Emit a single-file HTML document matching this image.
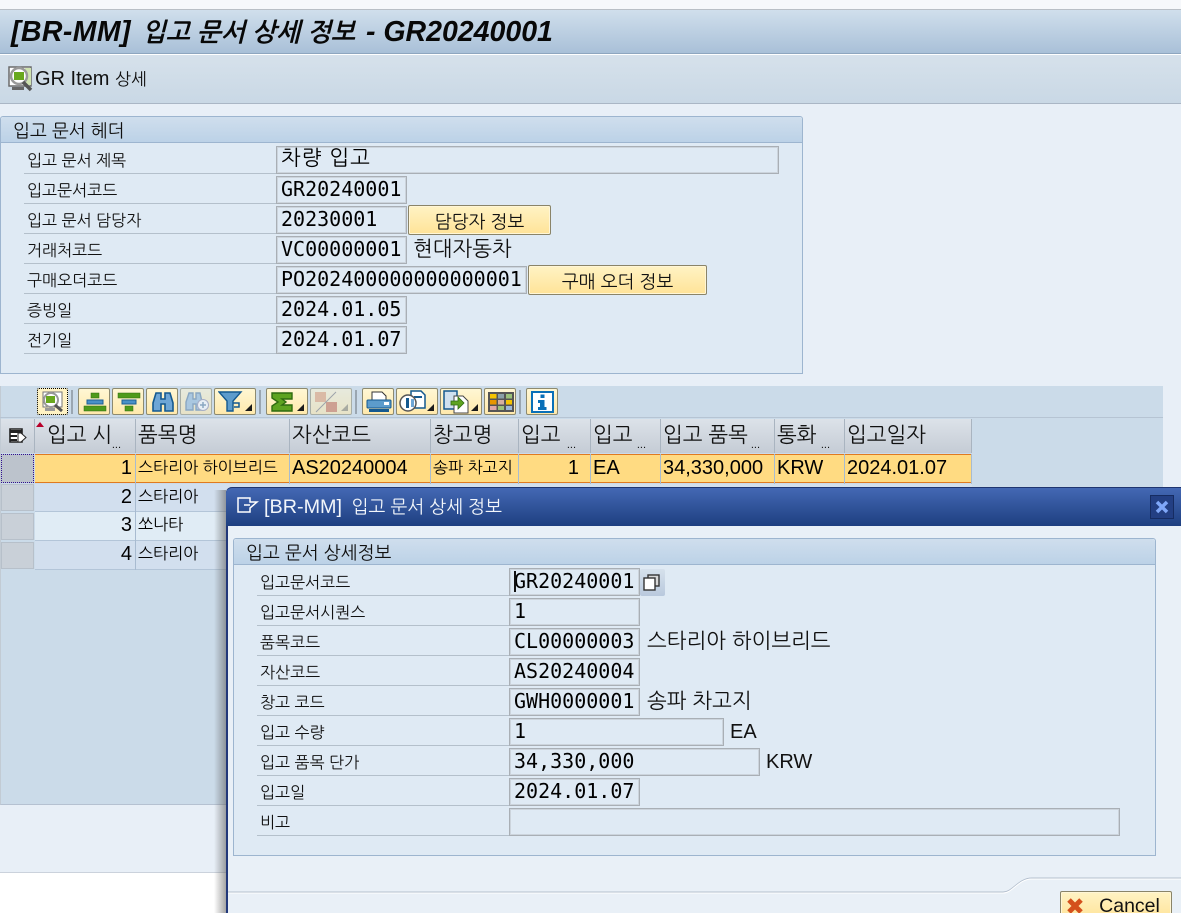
<!DOCTYPE html>
<html lang="ko"><head><meta charset="utf-8"><title>BR-MM</title>
<style>
html,body{margin:0;padding:0;width:1181px;height:913px;overflow:hidden;background:#fff}
body{position:relative;font-family:"Liberation Sans","NanumGothic","Noto Sans CJK KR",sans-serif;color:#000}
.a,.a>*{position:absolute;box-sizing:border-box}
div,span{white-space:nowrap}
.a{left:0;top:0;width:1181px;height:913px}
.ko{font-family:"NanumGothic","Noto Sans CJK KR",sans-serif}
.lb{font-family:"NanumGothic","Noto Sans CJK KR",sans-serif;font-size:16px;line-height:20px;color:#111;margin-top:1px}
.ln{height:1px;background:#b4c0cb}
.in{font-family:"DejaVu Sans Mono","Liberation Mono",monospace;font-size:20px;line-height:25px;height:28px;padding-left:4px;border:1px solid #a9afb5;box-shadow:inset 0 0 0 1px #ccd4dc;background:#dfeaf4;color:#000;overflow:hidden}
.tx{font-size:20px;line-height:24px;color:#111}
.tk{font-size:21px;line-height:24px;color:#111;margin-top:2px}
.btn{background:linear-gradient(#fff3c4,#ffe398);border:1px solid #8a8468;border-radius:2px;box-shadow:inset 0 0 0 1px #fff6d6;text-align:center;font-family:"NanumGothic","Noto Sans CJK KR",sans-serif;font-size:18px;line-height:32px;color:#111}
.tb{background:linear-gradient(#fff7d4,#ffe9ac);border:1px solid #8d8a70;border-radius:2px;height:27px;top:388px}
.tb svg,.dd{position:absolute}
.dd{right:3px;bottom:3px;width:0;height:0;border-style:solid;border-width:0 0 7px 7px;border-color:transparent transparent #1b1b1b transparent}
.sep{top:390px;width:2px;height:24px;background:#9aa6b1}
.hd{top:419px;height:34px;background:linear-gradient(#dce2e9,#c5ccd5);border-right:1px solid #a9b4c0;font-family:"NanumGothic","Noto Sans CJK KR",sans-serif;font-size:21px;line-height:34px;padding-left:2px;color:#111;overflow:hidden}
.dots{position:absolute;right:14px;bottom:4px;font:11px/8px "Liberation Sans",sans-serif;letter-spacing:0}
.cell{height:29px;font-size:20px;line-height:28px;overflow:hidden;padding-left:2px;color:#000}
.k{font-family:"NanumGothic","Noto Sans CJK KR",sans-serif;font-size:16px}
.r{text-align:right;padding:0 3px 0 0}
.sel{background:#c9d0d8;border:1px solid #b7c0ca;width:33px;left:1px}
.vl{width:1px;background:#a8bbd0}
</style></head><body>
<div class="a">
<!-- page -->
<div style="left:0;top:0;width:1181px;height:10px;background:#f6f8fb;border-bottom:1px solid #b9bfc6"></div>
<div style="left:0;top:10px;width:1181px;height:44px;background:linear-gradient(#d0dfec,#a9c0d8);border-bottom:1px solid #8ea6bf"></div>
<div style="left:11px;top:13.500px;font:italic bold 28.5px/36px 'Liberation Sans','NanumGothic',sans-serif;color:#080808"><span style="letter-spacing:.4px">[BR-MM]</span> <span class="ko" style="font-size:25.5px;margin:0 3px 0 3px">입고 문서 상세 정보</span> - GR20240001</div>
<div style="left:0;top:55px;width:1181px;height:49px;background:linear-gradient(#d6e1eb,#c9d8e5);border-bottom:1px solid #aab6c5"></div>
<svg style="left:8px;top:65px" width="26" height="28" viewBox="0 0 26 28"><rect x="1" y="2" width="22" height="19" fill="#fff" stroke="#6b6b6b" stroke-width="1.5"/><rect x="17" y="3" width="6" height="17" fill="#cfe3b0"/><circle cx="11" cy="11" r="8" fill="#fff" stroke="#999" stroke-width="2.5"/><rect x="6" y="7" width="10" height="8" fill="#69a81e"/><path d="M15 17l8 8" stroke="#555" stroke-width="3.5"/><rect x="4" y="22" width="12" height="3" fill="#666"/></svg>
<div style="left:35px;top:66px;font-size:20px;line-height:26px;color:#111">GR Item <span class="ko" style="font-size:17px">상세</span></div>
<div style="left:0;top:104px;width:1181px;height:769px;background:#e8eff7;border-bottom:1px solid #cbd2dc"></div>

<!-- header group -->
<div style="left:0;top:116px;width:803px;height:258px;background:#dfeaf4;border:1px solid #9db5cf;border-radius:3px 3px 0 0"></div>
<div style="left:1px;top:117px;width:801px;height:26px;background:linear-gradient(#cfdeed,#bcd2e7);border-bottom:1px solid #9db5cf;border-radius:3px 3px 0 0"></div>
<div class="ko" style="left:13px;top:119px;font-size:18px;line-height:24px;color:#111">입고 문서 헤더</div>

<div class="lb" style="left:27px;top:150px">입고 문서 제목</div><div class="ln" style="left:24px;top:173px;width:754px"></div>
<div class="lb" style="left:27px;top:180px">입고문서코드</div><div class="ln" style="left:24px;top:203px;width:252px"></div>
<div class="lb" style="left:27px;top:210px">입고 문서 담당자</div><div class="ln" style="left:24px;top:233px;width:252px"></div>
<div class="lb" style="left:27px;top:240px">거래처코드</div><div class="ln" style="left:24px;top:263px;width:252px"></div>
<div class="lb" style="left:27px;top:270px">구매오더코드</div><div class="ln" style="left:24px;top:293px;width:252px"></div>
<div class="lb" style="left:27px;top:300px">증빙일</div><div class="ln" style="left:24px;top:323px;width:252px"></div>
<div class="lb" style="left:27px;top:330px">전기일</div><div class="ln" style="left:24px;top:353px;width:252px"></div>

<div class="in ko" style="left:276px;top:146px;width:503px;font-family:'NanumGothic','Noto Sans CJK KR',sans-serif;font-size:21px;line-height:24px;letter-spacing:1px;padding-left:4px">차량 입고</div>
<div class="in" style="left:276px;top:176px;width:131px">GR20240001</div>
<div class="in" style="left:276px;top:206px;width:131px">20230001</div>
<div class="btn" style="left:408px;top:205px;width:143px;height:30px">담당자 정보</div>
<div class="in" style="left:276px;top:236px;width:131px">VC00000001</div>
<div class="tk ko" style="left:413px;top:236px">현대자동차</div>
<div class="in" style="left:276px;top:266px;width:251px">PO202400000000000001</div>
<div class="btn" style="left:528px;top:265px;width:179px;height:30px">구매 오더 정보</div>
<div class="in" style="left:276px;top:296px;width:131px">2024.01.05</div>
<div class="in" style="left:276px;top:326px;width:131px">2024.01.07</div>

<!-- grid -->
<div style="left:0;top:386px;width:1163px;height:419px;background:#cbdbe9;border-bottom:1px solid #b5c1d1;border-left:1px solid #c2cbd4"></div>
<div style="left:0;top:417px;width:1163px;height:1px;background:#b6c4d3"></div>

<!-- toolbar -->
<div class="tb" style="left:37px;width:31px;border:1px dotted #000;background:#fff3c4"><svg style="left:3px;top:2px" width="24" height="22" viewBox="0 0 24 22"><rect x="2" y="1" width="19" height="15" fill="#fff" stroke="#777"/><circle cx="10" cy="9" r="7" fill="#fff" stroke="#999" stroke-width="2"/><rect x="5" y="5" width="9" height="7" fill="#69a81e"/><path d="M14 14l7 6" stroke="#555" stroke-width="3"/><rect x="4" y="17" width="10" height="3" fill="#999"/></svg></div>
<div class="sep" style="left:71px"></div>
<div class="tb" style="left:78px;width:32px"><svg style="left:4px;top:3px" width="24" height="20" viewBox="0 0 24 20"><rect x="8" y="1" width="8" height="5" fill="#4f9a1a" stroke="#2f6b10" stroke-width=".5"/><rect x="4" y="8" width="16" height="4" fill="#4a90c8" stroke="#1c5f96"/><rect x="1" y="14" width="22" height="5" fill="#4f9a1a" stroke="#2f6b10" stroke-width=".5"/></svg></div>
<div class="tb" style="left:112px;width:32px"><svg style="left:4px;top:3px" width="24" height="20" viewBox="0 0 24 20"><rect x="1" y="1" width="22" height="5" fill="#4f9a1a" stroke="#2f6b10" stroke-width=".5"/><rect x="5" y="8" width="14" height="4" fill="#4a90c8" stroke="#1c5f96"/><rect x="8" y="14" width="8" height="5" fill="#4f9a1a" stroke="#2f6b10" stroke-width=".5"/></svg></div>
<div class="tb" style="left:146px;width:32px"><svg style="left:4px;top:2px" width="24" height="22" viewBox="0 0 24 22"><path d="M5 2h5v6h4V2h5l3 10v8h-8v-7h-4v7H2v-8z" fill="#6ea6d6" stroke="#14598f" stroke-width="1.6"/></svg></div>
<div class="tb" style="left:180px;width:32px;opacity:.55"><svg style="left:4px;top:2px" width="24" height="22" viewBox="0 0 24 22"><path d="M4 2h4v6h3V2h4l2 9v8H11v-6H8v6H1v-8z" fill="#8fb7da" stroke="#557ea3" stroke-width="1.4"/><circle cx="18" cy="14" r="5.5" fill="#fff" stroke="#88a"/><path d="M15 14h6M18 11v6" stroke="#557ea3" stroke-width="1.5"/></svg></div>
<div class="tb" style="left:214px;width:42px"><svg style="left:3px;top:2px" width="26" height="22" viewBox="0 0 26 22"><path d="M1 1h22l-8 9v10h-6V10z" fill="#5d9ccc" stroke="#14598f" stroke-width="1.4"/><path d="M15 12h6v4h-5" fill="none" stroke="#14598f" stroke-width="1.5"/></svg><span class="dd"></span></div>
<div class="sep" style="left:259px"></div>
<div class="tb" style="left:266px;width:42px"><svg style="left:3px;top:2px" width="24" height="22" viewBox="0 0 24 22"><path d="M2 2h20v6h-10l4 3-4 3h10v6H2v-5l6-4-6-4z" fill="#5ea320" stroke="#2f6b10" stroke-width="1.4"/></svg><span class="dd"></span></div>
<div class="tb" style="left:310px;width:42px;opacity:.55"><svg style="left:3px;top:2px" width="24" height="22" viewBox="0 0 24 22"><rect x="1" y="1" width="11" height="10" fill="#e8a070"/><rect x="12" y="11" width="11" height="10" fill="#d0704c"/><path d="M2 21L22 1" stroke="#777" stroke-width="1"/></svg><span class="dd" style="opacity:.5"></span></div>
<div class="sep" style="left:355px"></div>
<div class="tb" style="left:362px;width:32px"><svg style="left:3px;top:2px" width="26" height="22" viewBox="0 0 26 22"><path d="M6 1h10l4 4v5H6z" fill="#fff" stroke="#333"/><rect x="1" y="9" width="24" height="8" rx="1" fill="#5c9ccc" stroke="#14598f"/><rect x="18" y="11" width="5" height="3" fill="#fff"/><rect x="3" y="18" width="20" height="3" fill="#14598f"/></svg></div>
<div class="tb" style="left:396px;width:42px"><svg style="left:2px;top:1px" width="27" height="24" viewBox="0 0 27 24"><path d="M12 1h10l4 4v13H12z" fill="#fff" stroke="#14598f" stroke-width="1.5"/><rect x="15" y="6" width="8" height="2" fill="#14598f"/><circle cx="9" cy="13" r="8" fill="#fff" stroke="#555" stroke-width="1.5"/><rect x="7" y="8" width="3" height="10" fill="#14598f"/><rect x="12" y="9" width="3" height="8" fill="#6ea6d6"/></svg><span class="dd"></span></div>
<div class="tb" style="left:440px;width:42px"><svg style="left:2px;top:1px" width="27" height="24" viewBox="0 0 27 24"><rect x="1" y="1" width="13" height="18" fill="#cfe0ef" stroke="#14598f" stroke-width="1.5"/><path d="M11 6h9l5 5v12H11z" fill="#fff" stroke="#444"/><path d="M8 11h7V7l6 6-6 6v-4H8z" fill="#5ea320" stroke="#2f6b10" stroke-width=".8"/></svg><span class="dd"></span></div>
<div class="tb" style="left:484px;width:32px"><svg style="left:3px;top:3px" width="26" height="20" viewBox="0 0 26 20"><rect width="26" height="20" fill="#555"/><rect x="2" y="2" width="6.5" height="4.5" fill="#f5c400"/><rect x="10" y="2" width="6" height="4.5" fill="#8aa0a8"/><rect x="18" y="2" width="6" height="4.5" fill="#9bc27a"/><rect x="2" y="8" width="6.5" height="4.5" fill="#e89600"/><rect x="10" y="8" width="6" height="4.5" fill="#d6b0a0"/><rect x="18" y="8" width="6" height="4.5" fill="#f5c400"/><rect x="2" y="14" width="6.5" height="4" fill="#e0a8a8"/><rect x="10" y="14" width="6" height="4" fill="#9bc27a"/><rect x="18" y="14" width="6" height="4" fill="#9cb8d8"/></svg></div>
<div class="sep" style="left:519px"></div>
<div class="tb" style="left:526px;width:32px"><svg style="left:4px;top:2px" width="23" height="22" viewBox="0 0 23 22"><rect x="1" y="1" width="21" height="20" fill="#fff" stroke="#0a70b8" stroke-width="2"/><rect x="9.5" y="3.5" width="4" height="3.5" fill="#0a70b8"/><path d="M7 9h6.500v7h2v3H7v-3h2v-4H7z" fill="#0a70b8"/></svg></div>

<!-- columns header -->
<div class="hd" style="left:1px;width:34px"><svg style="position:absolute;left:8px;top:9px" width="18" height="16" viewBox="0 0 18 16"><path d="M1 1h12v13H1z" fill="#fff" stroke="#222" stroke-width="1.6"/><path d="M1 2h12v3H1zM1 7h7v2H1zM1 11h7v2H1z" fill="#222"/><path d="M9 5h3l5 4.500-5 4.500H9z" fill="#fff" stroke="#222"/></svg></div>
<div class="hd" style="left:35px;width:101px;padding-left:12px">입고 시<span class="dots">...</span></div>
<div style="left:36px;top:422px;width:0;height:0;border-style:solid;border-width:0 4px 5px 4px;border-color:transparent transparent #b8002a transparent"></div>
<div class="hd" style="left:136px;width:154px">품목명</div>
<div class="hd" style="left:290px;width:141px">자산코드</div>
<div class="hd" style="left:431px;width:88px">창고명</div>
<div class="hd" style="left:519px;width:72px">입고<span class="dots">...</span></div>
<div class="hd" style="left:591px;width:70px">입고<span class="dots">...</span></div>
<div class="hd" style="left:661px;width:114px">입고 품목<span class="dots">...</span></div>
<div class="hd" style="left:775px;width:70px">통화<span class="dots">...</span></div>
<div class="hd" style="left:845px;width:127px">입고일자</div>

<!-- rows -->
<div style="left:35px;top:454px;width:937px;height:29px;background:#ffdb82;border-top:1px solid #e07a20;border-bottom:1px solid #e07a20"></div>
<div style="left:35px;top:484px;width:937px;height:28px;background:#d2dfee"></div>
<div style="left:35px;top:512px;width:937px;height:29px;background:#e0ecf5"></div>
<div style="left:35px;top:541px;width:937px;height:29px;background:#d2dfee"></div>
<div style="left:35px;top:511px;width:937px;height:1px;background:#b3c5d8"></div>
<div style="left:35px;top:540px;width:937px;height:1px;background:#b3c5d8"></div>
<div style="left:35px;top:569px;width:937px;height:1px;background:#b3c5d8"></div>
<div class="vl" style="left:135px;top:454px;height:116px"></div>
<div class="vl" style="left:289px;top:454px;height:30px"></div>
<div class="vl" style="left:430px;top:454px;height:30px"></div>
<div class="vl" style="left:518px;top:454px;height:30px"></div>
<div class="vl" style="left:590px;top:454px;height:30px"></div>
<div class="vl" style="left:660px;top:454px;height:30px"></div>
<div class="vl" style="left:774px;top:454px;height:30px"></div>
<div class="vl" style="left:844px;top:454px;height:30px"></div>
<div class="vl" style="left:971px;top:454px;height:30px"></div>

<div class="sel" style="top:454px;height:29px;background:#bcc3cc;border:1px dotted #301090"></div>
<div class="sel" style="top:484px;height:27px"></div>
<div class="sel" style="top:513px;height:27px"></div>
<div class="sel" style="top:542px;height:27px"></div>

<div class="cell r" style="left:35px;top:454px;width:100px">1</div>
<div class="cell r" style="left:35px;top:483px;width:100px">2</div>
<div class="cell r" style="left:35px;top:511px;width:100px">3</div>
<div class="cell r" style="left:35px;top:540px;width:100px">4</div>
<div class="cell k" style="left:136px;top:454px;width:153px">스타리아 하이브리드</div>
<div class="cell k" style="left:136px;top:483px;width:90px">스타리아</div>
<div class="cell k" style="left:136px;top:511px;width:90px">쏘나타</div>
<div class="cell k" style="left:136px;top:540px;width:90px">스타리아</div>
<div class="cell" style="left:290px;top:454px;width:140px">AS20240004</div>
<div class="cell k" style="left:431px;top:454px;width:87px">송파 차고지</div>
<div class="cell r" style="left:519px;top:454px;width:71px;padding-right:11px">1</div>
<div class="cell" style="left:591px;top:454px;width:69px">EA</div>
<div class="cell" style="left:661px;top:454px;width:113px">34,330,000</div>
<div class="cell" style="left:775px;top:454px;width:69px">KRW</div>
<div class="cell" style="left:845px;top:454px;width:126px">2024.01.07</div>

<!-- dialog shadow -->
<div style="left:214px;top:490px;width:12px;height:423px;background:linear-gradient(90deg,rgba(90,90,90,0),rgba(90,90,90,.55))"></div>
<!-- dialog -->
<div style="left:226px;top:487px;width:955px;height:426px;background:#e9f0f7;border-left:2px solid #22387a;border-radius:6px 0 0 0"></div>
<div style="left:226px;top:487px;width:955px;height:39px;background:linear-gradient(#4468b4,#1e3f80);border-top:1px solid #1f3570;border-radius:6px 0 0 0"></div>
<svg style="left:237px;top:497px" width="22" height="16" viewBox="0 0 22 16"><path d="M1 1h12v4h7l-7 6v4H1z" fill="none" stroke="#fff" stroke-width="1.5"/><path d="M7 8h6" stroke="#fff" stroke-width="1.5"/></svg>
<div style="left:264px;top:495px;font-size:19.8px;line-height:24px;color:#f2f6fb">[BR-MM] <span class="ko" style="font-size:18px;margin-left:4px">입고 문서 상세 정보</span></div>
<div style="left:1150px;top:495px;width:24px;height:24px;background:#233f83;border:1px solid #162c62"></div>
<svg style="left:1155px;top:500px" width="14" height="14" viewBox="0 0 14 14"><path d="M2 2l10 10M12 2L2 12" stroke="#7fa7f8" stroke-width="3.5"/></svg>

<!-- dialog group -->
<div style="left:233px;top:538px;width:923px;height:318px;background:#dfeaf4;border:1px solid #9db5cf;border-radius:3px 3px 0 0"></div>
<div style="left:234px;top:539px;width:921px;height:26px;background:linear-gradient(#cfdeed,#bcd2e7);border-bottom:1px solid #9db5cf;border-radius:3px 3px 0 0"></div>
<div class="ko" style="left:246px;top:541px;font-size:18px;line-height:24px;color:#111">입고 문서 상세정보</div>

<div class="lb" style="left:260px;top:572px">입고문서코드</div><div class="ln" style="left:257px;top:595px;width:252px"></div>
<div class="lb" style="left:260px;top:602px">입고문서시퀀스</div><div class="ln" style="left:257px;top:625px;width:252px"></div>
<div class="lb" style="left:260px;top:632px">품목코드</div><div class="ln" style="left:257px;top:655px;width:252px"></div>
<div class="lb" style="left:260px;top:662px">자산코드</div><div class="ln" style="left:257px;top:685px;width:252px"></div>
<div class="lb" style="left:260px;top:692px">창고 코드</div><div class="ln" style="left:257px;top:715px;width:252px"></div>
<div class="lb" style="left:260px;top:722px">입고 수량</div><div class="ln" style="left:257px;top:745px;width:252px"></div>
<div class="lb" style="left:260px;top:752px">입고 품목 단가</div><div class="ln" style="left:257px;top:775px;width:252px"></div>
<div class="lb" style="left:260px;top:782px">입고일</div><div class="ln" style="left:257px;top:805px;width:252px"></div>
<div class="lb" style="left:260px;top:812px">비고</div><div class="ln" style="left:257px;top:835px;width:252px"></div>

<div class="in" style="left:509px;top:568px;width:131px">GR20240001</div>
<div style="left:514px;top:571px;width:2px;height:21px;background:#111"></div>
<div style="left:640px;top:569px;width:25px;height:27px;background:linear-gradient(#d6e1ec,#b9c9dd);border-radius:2px"></div>
<svg style="left:642px;top:573px" width="20" height="19" viewBox="0 0 20 19"><rect x="6" y="2" width="11" height="11" fill="#d8d8d8" stroke="#333" stroke-width="1.4"/><rect x="2" y="5" width="11" height="12" fill="#fff" stroke="#333" stroke-width="1.4"/></svg>
<div class="in" style="left:509px;top:598px;width:131px">1</div>
<div class="in" style="left:509px;top:628px;width:131px">CL00000003</div>
<div class="tk ko" style="left:647px;top:628px">스타리아 하이브리드</div>
<div class="in" style="left:509px;top:658px;width:131px">AS20240004</div>
<div class="in" style="left:509px;top:688px;width:131px">GWH0000001</div>
<div class="tk ko" style="left:647px;top:688px">송파 차고지</div>
<div class="in" style="left:509px;top:718px;width:215px">1</div>
<div class="tx" style="left:730px;top:720px">EA</div>
<div class="in" style="left:509px;top:748px;width:251px">34,330,000</div>
<div class="tx" style="left:766px;top:750px">KRW</div>
<div class="in" style="left:509px;top:778px;width:131px">2024.01.07</div>
<div class="in" style="left:509px;top:808px;width:611px"></div>

<!-- footer -->
<svg style="left:228px;top:876px" width="953" height="37" viewBox="0 0 953 37"><path d="M0 16H775C785 16 790 2 804 2H953V37H0Z" fill="#e9f0f7"/><path d="M0 16H775C785 16 790 2 804 2H953" fill="none" stroke="#b3bfce" stroke-width="1"/><path d="M0 17H775C785 17 790 3 804 3H953" fill="none" stroke="#fff" stroke-width="1"/></svg>
<div class="btn" style="left:1060px;top:891px;width:112px;height:30px;font-family:'Liberation Sans',sans-serif;font-size:19.5px;line-height:29px;padding-left:27px">Cancel</div>
<svg style="left:1066px;top:897px" width="18" height="18" viewBox="0 0 18 18"><path d="M3 3l12 12M15 3L3 15" stroke="#d4501c" stroke-width="5"/></svg>
</div>
</body></html>
